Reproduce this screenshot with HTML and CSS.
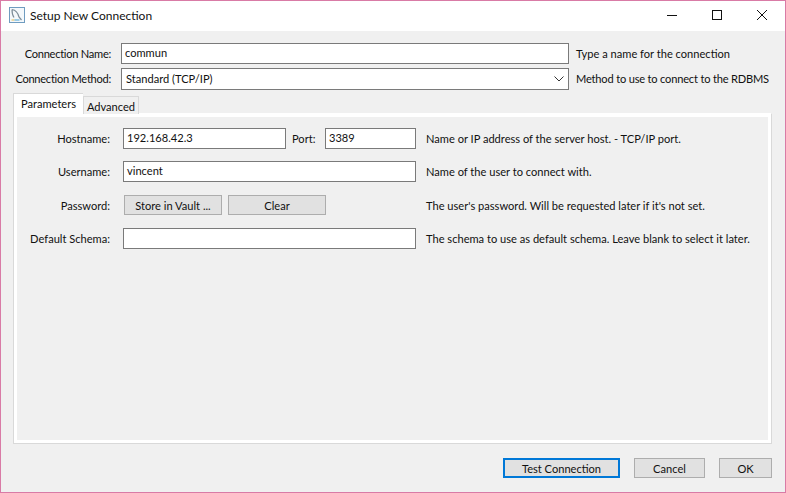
FILE: index.html
```html
<!DOCTYPE html>
<html lang="en">
<head>
    <meta charset="UTF-8">
    <title>Setup New Connection</title>
    <link rel="stylesheet" href="styles.css">
</head>
<body>
    <div class="window">
        <div class="titlebar">
            <svg class="app-icon" width="16" height="16" viewBox="0 0 16 16">
                <rect x="0.5" y="0.5" width="15" height="15" fill="#f4f8fb" stroke="#6f9cc0"/>
                <path d="M3 2.5c3 .5 6 3.5 7 7.5l2.5 3M3 2.5c0 3 .5 6 2 8" fill="none" stroke="#7d8c98" stroke-width="1.2"/>
                <path d="M2.5 13h3" stroke="#e8c46a" stroke-width="1.2"/>
                <path d="M5.5 13h5" stroke="#5fb0dc" stroke-width="1.2"/>
            </svg>
            <span class="title">Setup New Connection</span>
            <div class="controls">
                <svg width="12" height="12" viewBox="0 0 12 12"><path d="M1 6.5h10" stroke="#111" fill="none"/></svg>
                <svg width="12" height="12" viewBox="0 0 12 12"><rect x="1.5" y="1.5" width="9" height="9" stroke="#111" fill="none"/></svg>
                <svg width="12" height="12" viewBox="0 0 12 12"><path d="M1 1l10 10M11 1L1 11" stroke="#111" fill="none"/></svg>
            </div>
        </div>

        <div class="content">
            <div class="top-form">
                <label class="label">Connection Name:</label>
                <div class="input name-input">commun</div>
                <span class="hint">Type a name for the connection</span>

                <label class="label">Connection Method:</label>
                <div class="input select">
                    <span>Standard (TCP/IP)</span>
                    <svg width="10" height="6" viewBox="0 0 10 6"><path d="M.5.5L5 5 9.5.5" stroke="#333" fill="none"/></svg>
                </div>
                <span class="hint method-hint">Method to use to connect to the RDBMS</span>
            </div>

            <div class="tabs">
                <div class="tab active">Parameters</div>
                <div class="tab">Advanced</div>
            </div>

            <div class="panel">
                <div class="panel-form">
                    <label class="label">Hostname:</label>
                    <div class="host-row">
                        <div class="input host-input">192.168.42.3</div>
                        <label class="label port-label">Port:</label>
                        <div class="input port-input">3389</div>
                    </div>
                    <span class="hint">Name or IP address of the server host. - TCP/IP port.</span>

                    <label class="label">Username:</label>
                    <div class="input">vincent</div>
                    <span class="hint">Name of the user to connect with.</span>

                    <label class="label">Password:</label>
                    <div class="button-row">
                        <button class="btn vault-btn">Store in Vault ...</button>
                        <button class="btn vault-btn">Clear</button>
                    </div>
                    <span class="hint">The user's password. Will be requested later if it's not set.</span>

                    <label class="label">Default Schema:</label>
                    <div class="input"></div>
                    <span class="hint">The schema to use as default schema. Leave blank to select it later.</span>
                </div>
            </div>

            <div class="footer">
                <button class="btn test-btn">Test Connection</button>
                <button class="btn cancel-btn">Cancel</button>
                <button class="btn ok-btn">OK</button>
            </div>
        </div>
    </div>
</body>
</html>
```

FILE: styles.css
```css
* {
    box-sizing: border-box;
}
html, body {
    margin: 0;
    height: 100%;
}
body {
    font-family: Lato, "Noto Sans", Arial, sans-serif;
    font-size: 11.1px;
    color: #111;
}
.window {
    height: 493px;
    border: 1px solid #d97ba6;
    display: flex;
    flex-direction: column;
    background-color: #f0f0f0;
}
.titlebar {
    height: 30px;
    background-color: #fff;
    display: flex;
    align-items: center;
    padding-left: 8px;
    padding-bottom: 2px;
    flex-shrink: 0;
}
.app-icon {
    margin-right: 5px;
}
.title {
    font-size: 12px;
}
.controls {
    margin-left: auto;
    display: flex;
    gap: 33px;
    padding-right: 17px;
}
.content {
    flex: 1;
    padding: 12px 13px 0 12px;
    display: flex;
    flex-direction: column;
}
.top-form {
    display: grid;
    grid-template-columns: 100px 448px auto;
    column-gap: 8px;
    row-gap: 4px;
    grid-auto-rows: 21px;
    align-items: center;
}
.top-form .label {
    margin-right: 2px;
    letter-spacing: -0.27px;
}
.top-form .hint {
    margin-left: -1px;
}
.top-form .method-hint {
    letter-spacing: -0.19px;
}
.label {
    text-align: right;
    white-space: nowrap;
}
.hint {
    white-space: nowrap;
}
.input {
    height: 21px;
    border: 1px solid #7a7a7a;
    background-color: #fff;
    padding: 0 3px;
    line-height: 18px;
    white-space: nowrap;
}
.select {
    height: 22px;
    display: flex;
    align-items: center;
    justify-content: space-between;
    padding: 0 4px;
}
.tabs {
    display: flex;
    margin-top: 4px;
    height: 21px;
    align-items: flex-end;
    position: relative;
    z-index: 1;
}
.tab {
    height: 18px;
    width: 56px;
    text-align: center;
    background-color: #f0f0f0;
    border: 1px solid #d9d9d9;
    border-bottom: none;
    line-height: 19px;
}
.tab.active {
    height: 21px;
    width: 70px;
    background-color: #fff;
    border-right: none;
}
.panel {
    height: 331px;
    margin-top: -1px;
    border: 1px solid #d9d9d9;
    border-top-color: #fff;
    box-shadow: inset 0 0 0 3px #fff;
    padding: 14px 12px 0 12px;
}
.panel-form {
    display: grid;
    grid-template-columns: 85px 293px auto;
    grid-template-rows: 21px 21px 22px 21px;
    column-gap: 12px;
    row-gap: 12px;
    align-items: center;
}
.panel-form .label {
    margin-right: 1px;
}
.panel-form .hint {
    margin-left: -2px;
}
.host-row {
    display: flex;
    align-items: center;
}
.host-input {
    width: 163px;
}
.port-label {
    margin-left: 6px;
}
.port-input {
    width: 91px;
    margin-left: auto;
}
.button-row {
    display: flex;
    gap: 6px;
    padding-left: 1px;
}
.btn {
    height: 20px;
    font-family: inherit;
    font-size: inherit;
    color: #111;
    background-color: #e1e1e1;
    border: 1px solid #adadad;
    padding: 0;
}
.vault-btn {
    width: 98px;
}
.footer {
    display: flex;
    justify-content: flex-end;
    margin-top: 14px;
}
.test-btn {
    width: 117px;
    border: 2px solid #0078d7;
}
.cancel-btn {
    width: 71px;
    margin-left: 14px;
}
.ok-btn {
    width: 53px;
    margin-left: 14px;
}
```
